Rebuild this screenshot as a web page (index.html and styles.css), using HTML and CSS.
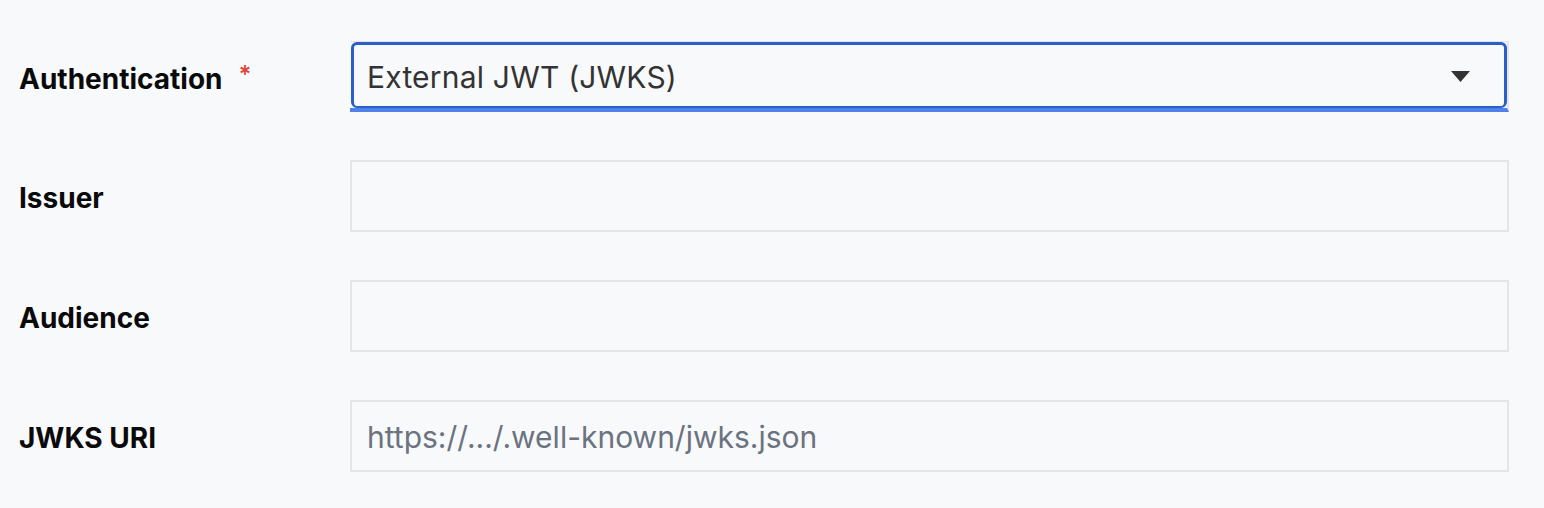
FILE: index.html
```html
<!DOCTYPE html>
<html lang="en">
<head>
<meta charset="utf-8">
<title>Authentication settings</title>
<link rel="stylesheet" href="styles.css">
</head>
<body>
<form class="form">
  <div class="row row-select">
    <label class="label">Authentication<span class="req">*</span></label>
    <div class="select-wrap">
      <div class="select-focus">
        <span class="select-value">External JWT (JWKS)</span>
        <svg class="caret" width="19" height="11" viewBox="0 0 19 11"><path d="M0 0H19L9.5 11Z" fill="#333"/></svg>
      </div>
    </div>
  </div>
  <div class="row">
    <label class="label">Issuer</label>
    <div class="input"></div>
  </div>
  <div class="row">
    <label class="label">Audience</label>
    <div class="input"></div>
  </div>
  <div class="row">
    <label class="label">JWKS URI</label>
    <div class="input"><span class="placeholder">https://.../.well-known/jwks.json</span></div>
  </div>
</form>
</body>
</html>
```

FILE: styles.css
```css
html, body {
  margin: 0;
  padding: 0;
  background: #f8f9fb;
}
body {
  font-family: Inter, "Noto Sans", "Liberation Sans", sans-serif;
  color: #111;
}
.form {
  display: flex;
  flex-direction: column;
  gap: 48px;
  padding: 41px 35px 0 19px;
}
.row {
  display: flex;
  align-items: center;
  height: 72px;
}
.row-select {
  height: 71px;
}
.label {
  width: 331px;
  flex: none;
  font-size: 28px;
  font-weight: 700;
  color: #0a0a0a;
  display: flex;
  align-items: flex-start;
  padding-top: 4px;
}
.req {
  color: #e0483c;
  font-size: 24px;
  font-weight: 600;
  margin-left: 16px;
  margin-top: -2px;
}
.input {
  flex: 1;
  height: 100%;
  box-sizing: border-box;
  border: 2px solid #e3e5e9;
  background: #f8f9fb;
  display: flex;
  align-items: center;
  padding: 2px 15px 0;
}
.placeholder {
  font-size: 30px;
  color: #6b7280;
}
.select-wrap {
  flex: 1;
  height: 100%;
  box-sizing: border-box;
  border-top: 1px solid #e3e5e9;
  border-right: 2px solid #e3e5e9;
  border-bottom: 4px solid #4f82e8;
  display: flex;
}
.select-focus {
  flex: 1;
  box-sizing: border-box;
  margin-left: 1px;
  border: 3px solid #2a5fc8;
  border-bottom-width: 2px;
  border-radius: 6px;
  background: #f8f9fb;
  display: flex;
  align-items: center;
  justify-content: space-between;
  padding: 2px 34px 0 13px;
}
.select-value {
  font-size: 30px;
  color: #333;
  letter-spacing: 0.2px;
}
.caret {
  display: block;
}
```
